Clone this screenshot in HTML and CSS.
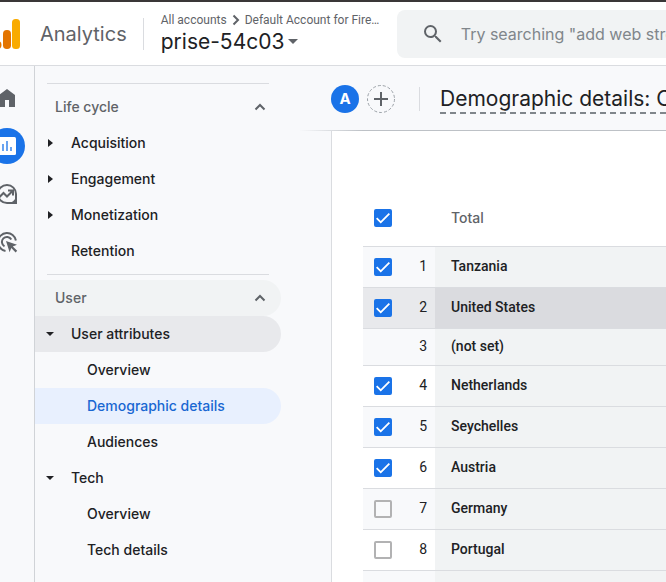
FILE: index.html
```html
<!DOCTYPE html>
<html lang="en">
<head>
<meta charset="utf-8">
<meta name="viewport" content="width=device-width, initial-scale=1">
<title>Analytics</title>
<link rel="stylesheet" href="styles.css">
</head>
<body>
<header class="topbar">
  <svg class="logo" viewBox="0 0 28 30" aria-hidden="true">
    <rect x="20" y="0" width="8" height="30" rx="3.5" fill="#f9ab00"/>
    <rect x="11" y="11" width="8" height="19" rx="3.8" fill="#e37400"/>
    <circle cx="5.5" cy="26" r="4" fill="#e37400"/>
  </svg>
  <span class="product">Analytics</span>
  <div class="account">
    <div class="crumbs">
      <span>All accounts</span>
      <svg class="crumb-arrow" viewBox="0 0 8 12" aria-hidden="true"><path d="M1.500 1.500 6 6l-4.500 4.500"/></svg>
      <span>Default Account for Fire…</span>
    </div>
    <button class="property" type="button">prise-54c03<span class="caret"></span></button>
  </div>
  <label class="search">
    <svg viewBox="0 0 24 24" aria-hidden="true"><path fill="currentColor" d="M15.500 14h-.79l-.28-.27A6.470 6.470 0 0 0 16 9.500 6.500 6.500 0 1 0 9.500 16c1.610 0 3.090-.59 4.230-1.570l.27.28v.79l5 4.990L20.490 19zm-6 0a4.500 4.500 0 1 1 0-9 4.500 4.500 0 0 1 0 9z"/></svg>
    <input type="text" aria-label="Search" placeholder="Try searching &quot;add web stream&quot;">
  </label>
</header>

<div class="shell">
  <nav class="rail" aria-label="Primary">
    <a href="#" aria-label="Home"><svg viewBox="0 0 24 24"><path fill="currentColor" d="M12 3 4 9v12h6v-7h4v7h6V9z"/></svg></a>
    <a href="#" class="current" aria-label="Reports"><svg viewBox="0 0 24 24"><rect x="3" y="3" width="18" height="18" rx="1.500" fill="#fff"/><path stroke="#1a73e8" stroke-width="1.300" d="M8 17v-7M12 17V7M16 17v-4"/></svg></a>
    <a href="#" aria-label="Explore"><svg viewBox="0 0 24 24"><path fill="none" stroke="currentColor" stroke-width="2" d="M12 3a9 9 0 1 0 0 18h9v-9a9 9 0 0 0-9-9zM4 15.500l4.500-4.500 3.500 3.500L17.500 9M13 8.500h5v5"/><path fill="currentColor" d="M21.500 14v7.500H14q5.500-2 7.500-7.500z"/></svg></a>
    <a href="#" aria-label="Advertising"><svg viewBox="0 0 24 24"><path fill="none" stroke="currentColor" stroke-width="2" d="M10.500 20.900A9 9 0 1 1 20.900 10.500M9.500 16.300A5 5 0 1 1 16.300 9.500"/><path fill="currentColor" d="m11 11 11 3.700-4.200 1.800 4.400 4.300-1.600 1.600-4.300-4.400-1.700 4.200z"/></svg></a>
  </nav>

  <nav class="sidebar" aria-label="Reports">
    <section class="group">
      <button class="group-title" type="button">Life cycle<svg viewBox="0 0 12 8" aria-hidden="true"><path d="m1.500 6.500 4.500-4.500 4.500 4.500"/></svg></button>
      <a class="item closed" href="#">Acquisition</a>
      <a class="item closed" href="#">Engagement</a>
      <a class="item closed" href="#">Monetization</a>
      <a class="item" href="#">Retention</a>
    </section>
    <section class="group">
      <button class="group-title hovered" type="button">User<svg viewBox="0 0 12 8" aria-hidden="true"><path d="m1.500 6.500 4.500-4.500 4.500 4.500"/></svg></button>
      <a class="item open parent" href="#">User attributes</a>
      <a class="item sub" href="#">Overview</a>
      <a class="item sub selected" href="#">Demographic details</a>
      <a class="item sub" href="#">Audiences</a>
      <a class="item open" href="#">Tech</a>
      <a class="item sub" href="#">Overview</a>
      <a class="item sub" href="#">Tech details</a>
    </section>
  </nav>

  <main class="main">
    <div class="report-head">
      <button class="segment" type="button">A</button>
      <button class="add" type="button" aria-label="Add comparison"><svg viewBox="0 0 28 28" aria-hidden="true"><circle cx="14" cy="14" r="13.500"/><path d="M14 7v14M7 14h14"/></svg></button>
      <h1>Demographic details: Country</h1>
    </div>
    <div class="report-body">
      <table>
        <thead>
          <tr><th class="check"><input type="checkbox" aria-label="Select all" checked></th><th class="num"></th><th class="name">Total</th></tr>
        </thead>
        <tbody>
          <tr><td class="check"><input type="checkbox" aria-label="Tanzania" checked></td><td class="num">1</td><td class="name">Tanzania</td></tr>
          <tr class="hovered"><td class="check"><input type="checkbox" aria-label="United States" checked></td><td class="num">2</td><td class="name">United States</td></tr>
          <tr class="short"><td class="check"></td><td class="num">3</td><td class="name">(not set)</td></tr>
          <tr><td class="check"><input type="checkbox" aria-label="Netherlands" checked></td><td class="num">4</td><td class="name">Netherlands</td></tr>
          <tr><td class="check"><input type="checkbox" aria-label="Seychelles" checked></td><td class="num">5</td><td class="name">Seychelles</td></tr>
          <tr><td class="check"><input type="checkbox" aria-label="Austria" checked></td><td class="num">6</td><td class="name">Austria</td></tr>
          <tr><td class="check"><input type="checkbox" aria-label="Germany"></td><td class="num">7</td><td class="name">Germany</td></tr>
          <tr><td class="check"><input type="checkbox" aria-label="Portugal"></td><td class="num">8</td><td class="name">Portugal</td></tr>
          <tr><td class="check"></td><td class="num"></td><td class="name"></td></tr>
        </tbody>
      </table>
    </div>
  </main>
</div>
</body>
</html>
```

FILE: styles.css
```css
:root {
  --ink: #202124;
  --muted: #5f6368;
  --line: #dadce0;
  --surface: #f8f9fb;
  --blue: #1a73e8;
  --sans: "Google Sans", Inter, Roboto, sans-serif;
  --text: Roboto, Arial, sans-serif;
}

* { box-sizing: border-box; }

body {
  margin: 0;
  height: 100vh;
  overflow: hidden;
  display: flex;
  flex-direction: column;
  background: var(--surface);
  color: var(--ink);
  font: 14px/20px var(--text);
}

button {
  border: 0;
  padding: 0;
  background: none;
  color: inherit;
  font: inherit;
  text-align: left;
}

a { color: inherit; text-decoration: none; }

/* Top bar */
.topbar {
  display: flex;
  align-items: center;
  flex: none;
  height: 66px;
  border-top: 2px solid #3a3738;
  border-bottom: 1px solid var(--line);
  background: #fff;
}

.logo { flex: none; width: 28px; height: 30px; margin-left: -8px; }

.product {
  margin-left: 20px;
  color: var(--muted);
  font: 20px/28px var(--sans);
}

.account {
  flex: none;
  width: 254px;
  margin-left: 16px;
  padding-left: 18px;
  background: linear-gradient(var(--line), var(--line)) 0 center / 1px 32px no-repeat;
}

.crumbs {
  display: flex;
  align-items: center;
  gap: 5px;
  color: var(--muted);
  font-size: 12px;
  line-height: 16px;
  white-space: nowrap;
}

.crumb-arrow { width: 8px; height: 12px; fill: none; stroke: var(--muted); stroke-width: 2; }

.property {
  display: flex;
  align-items: center;
  gap: 4px;
  font: 21px/28px var(--sans);
}

.caret { border: 5px solid transparent; border-top-color: var(--muted); border-bottom: 0; }

.search {
  display: flex;
  align-items: center;
  flex: 1;
  min-width: 0;
  height: 48px;
  padding-left: 24px;
  border-radius: 8px 0 0 8px;
  background: #f1f3f4;
  color: var(--muted);
}

.search svg { flex: none; width: 24px; height: 24px; margin-right: 16px; }

.search input {
  flex: 1;
  min-width: 0;
  border: 0;
  padding: 0;
  outline: 0;
  background: none;
  font: 16px/24px var(--sans);
}

.search input::placeholder { color: #80868b; }

/* Shell */
.shell { display: flex; flex: 1; min-height: 0; overflow: hidden; }

.rail {
  display: flex;
  flex-direction: column;
  align-items: center;
  gap: 12px;
  flex: none;
  width: 55px;
  margin-left: -20px;
  padding-top: 14px;
  border-right: 1px solid #d0d3d7;
  color: var(--muted);
}

.rail a {
  display: grid;
  place-items: center;
  width: 36px;
  height: 36px;
  border-radius: 50%;
}

.rail svg { width: 24px; height: 24px; }
.rail .current { background: var(--blue); }

.sidebar {
  flex: none;
  width: 264px;
  padding: 12px 18px 0 0;
  font-family: var(--sans);
  font-weight: 500;
}

.group { padding: 5px 0; }

.group::before {
  content: "";
  display: block;
  height: 1px;
  margin: 0 12px 5px;
  background: var(--line);
}

.group + .group { padding-top: 0; }

.group-title,
.item {
  display: flex;
  align-items: center;
  width: 100%;
  height: 36px;
  border-radius: 0 18px 18px 0;
}

.group-title {
  justify-content: space-between;
  padding: 0 15px 0 20px;
  color: var(--muted);
}

.group-title svg { width: 12px; height: 8px; fill: none; stroke: currentColor; stroke-width: 2; }
.group-title.hovered { background: #f1f3f4; }

.item { padding-left: 36px; }
.item.sub { padding-left: 52px; }
.item.parent { background: #e8e9ec; }
.item.selected { background: #e8f0fe; color: #1967d2; }

.item.closed,
.item.open { padding-left: 11px; }

.item.closed::before,
.item.open::before {
  content: "";
  border: 4px solid transparent;
}

.item.closed::before { margin: 0 18px 0 2px; border-left: 5px solid; border-right: 0; }
.item.open::before { margin-right: 17px; border-top-color: currentColor; border-bottom: 0; }

/* Report */
.main { flex: 1; min-width: 0; display: flex; flex-direction: column; }

.report-head {
  display: flex;
  align-items: center;
  flex: none;
  height: 65px;
  padding-left: 32px;
  background: linear-gradient(90deg, transparent, #bdc1c6 64px) bottom / 100% 1px no-repeat;
}

.segment {
  flex: none;
  width: 28px;
  height: 28px;
  border-radius: 50%;
  background: var(--blue);
  color: #fff;
  font: 700 15px/28px var(--sans);
  text-align: center;
}

.add { flex: none; width: 28px; height: 28px; margin-left: 8px; }
.add svg { display: block; fill: none; stroke: var(--muted); }
.add circle { stroke: #9aa0a6; stroke-dasharray: 3 2; }
.add path { stroke-width: 2; }

.report-head h1 {
  margin: 0 0 0 24px;
  padding-left: 21px;
  overflow: hidden;
  background:
    linear-gradient(var(--line), var(--line)) 0 center / 1px 24px no-repeat,
    repeating-linear-gradient(90deg, #80868b 0 6px, transparent 6px 10px) 21px bottom / 100% 2px no-repeat;
  font: 21px/30px var(--sans);
  white-space: nowrap;
}

.report-body {
  flex: 1;
  min-height: 0;
  margin-left: 32px;
  padding: 59px 0 0 31px;
  overflow: hidden;
  border-left: 1px solid var(--line);
  background: #fff;
}

table { width: 100%; border-collapse: separate; border-spacing: 0; table-layout: fixed; }

th, td { height: 41px; padding: 0; border-bottom: 1px solid var(--line); text-align: left; }
th { height: 57px; color: var(--muted); font-family: var(--sans); font-weight: 500; }

.check { width: 40px; padding-left: 11px; }
.num { width: 32px; padding-right: 8px; text-align: right; }
.name { padding-left: 16px; }

td.num, td.name { padding-bottom: 2px; }
td.name { background: #f1f3f4; font-weight: 500; }
.short td { height: 37px; }
tbody tr:nth-child(odd) { background: var(--surface); }
tbody .hovered { background: #e8e9ec; }
tbody .hovered .name { background: #dadbdf; }

td input, th input {
  appearance: none;
  display: block;
  width: 18px;
  height: 18px;
  margin: 0;
  border: 2px solid #b2b2b3;
  border-radius: 2px;
}

input:checked { border-color: var(--blue); background: var(--blue); }

input:checked::after {
  content: "";
  display: block;
  width: 14px;
  height: 14px;
  background: #fff;
  clip-path: polygon(0 56%, 9% 47%, 34% 72%, 91% 14%, 100% 23%, 34% 89%);
}
```
